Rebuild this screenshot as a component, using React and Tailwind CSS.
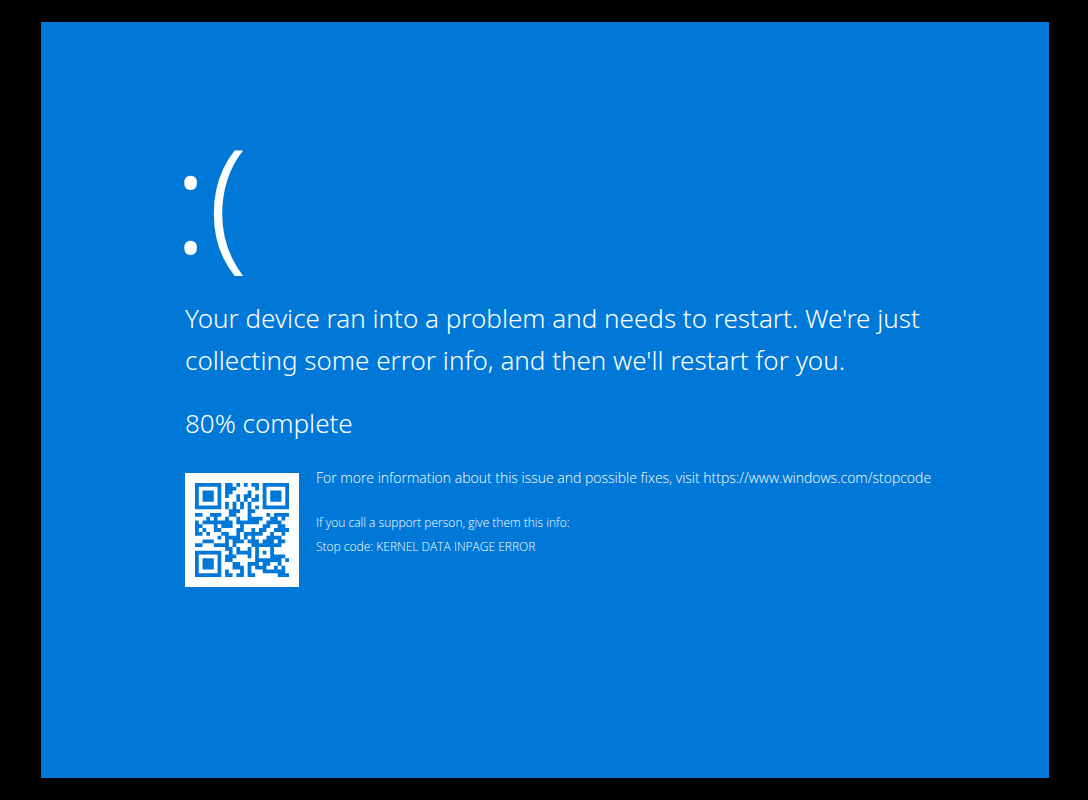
import React, { useMemo } from 'react';

const STOP_URL = 'https://www.windows.com/stopcode';

// QR version 2, error correction level L
const SIZE = 25;
const DATA_LEN = 34;
const ECC_LEN = 10;
const FORMAT_BITS = 0b110011000101111; // level L, mask 4

const gfMultiply = (x, y) => {
  let z = 0;
  for (let i = 7; i >= 0; i--) {
    z = (z << 1) ^ ((z >>> 7) * 0x11d);
    z ^= ((y >>> i) & 1) * x;
  }
  return z;
};

const reedSolomon = (data) => {
  const divisor = new Array(ECC_LEN - 1).fill(0).concat(1);
  let root = 1;
  for (let i = 0; i < ECC_LEN; i++) {
    for (let j = 0; j < ECC_LEN; j++) {
      divisor[j] = gfMultiply(divisor[j], root);
      if (j + 1 < ECC_LEN) divisor[j] ^= divisor[j + 1];
    }
    root = gfMultiply(root, 2);
  }

  const result = new Array(ECC_LEN).fill(0);
  data.forEach((b) => {
    const factor = b ^ result.shift();
    result.push(0);
    divisor.forEach((d, i) => {
      result[i] ^= gfMultiply(d, factor);
    });
  });
  return result;
};

const encodeText = (text) => {
  const bits = [];
  const push = (value, len) => {
    for (let i = len - 1; i >= 0; i--) bits.push((value >>> i) & 1);
  };
  push(4, 4); // byte mode
  push(text.length, 8);
  [...text].forEach((c) => push(c.charCodeAt(0), 8));
  while (bits.length < DATA_LEN * 8) bits.push(0);

  const bytes = [];
  for (let i = 0; i < bits.length; i += 8) {
    bytes.push(parseInt(bits.slice(i, i + 8).join(''), 2));
  }
  return bytes.concat(reedSolomon(bytes));
};

const buildQr = (text) => {
  // grid[y][x], null means the module is still free for data
  const grid = Array.from({ length: SIZE }, () => new Array(SIZE).fill(null));
  const set = (x, y, dark) => {
    if (x >= 0 && x < SIZE && y >= 0 && y < SIZE) grid[y][x] = Boolean(dark);
  };

  // Timing patterns
  for (let i = 0; i < SIZE; i++) {
    set(6, i, i % 2 === 0);
    set(i, 6, i % 2 === 0);
  }

  // Finder patterns with their light border
  [[3, 3], [SIZE - 4, 3], [3, SIZE - 4]].forEach(([cx, cy]) => {
    for (let dy = -4; dy <= 4; dy++) {
      for (let dx = -4; dx <= 4; dx++) {
        const dist = Math.max(Math.abs(dx), Math.abs(dy));
        set(cx + dx, cy + dy, dist !== 2 && dist !== 4);
      }
    }
  });

  // Alignment pattern
  for (let dy = -2; dy <= 2; dy++) {
    for (let dx = -2; dx <= 2; dx++) {
      set(18 + dx, 18 + dy, Math.max(Math.abs(dx), Math.abs(dy)) !== 1);
    }
  }

  // Format info, both copies
  const bit = (i) => (FORMAT_BITS >>> i) & 1;
  for (let i = 0; i <= 5; i++) set(8, i, bit(i));
  set(8, 7, bit(6));
  set(8, 8, bit(7));
  set(7, 8, bit(8));
  for (let i = 9; i < 15; i++) set(14 - i, 8, bit(i));
  for (let i = 0; i < 8; i++) set(SIZE - 1 - i, 8, bit(i));
  for (let i = 8; i < 15; i++) set(8, SIZE - 15 + i, bit(i));
  set(8, SIZE - 8, true);

  // Data in zigzag columns, masked
  const codewords = encodeText(text);
  let n = 0;
  for (let right = SIZE - 1; right >= 1; right -= 2) {
    if (right === 6) right = 5;
    for (let v = 0; v < SIZE; v++) {
      for (let j = 0; j < 2; j++) {
        const x = right - j;
        const upward = ((right + 1) & 2) === 0;
        const y = upward ? SIZE - 1 - v : v;
        if (grid[y][x] !== null) continue;
        const byte = codewords[n >>> 3] || 0;
        const value = (byte >>> (7 - (n & 7))) & 1;
        const mask = (Math.floor(x / 3) + Math.floor(y / 2)) % 2 === 0;
        grid[y][x] = Boolean(value) !== mask;
        n++;
      }
    }
  }
  return grid;
};

const QrCode = ({ text }) => {
  const path = useMemo(() => {
    let d = '';
    buildQr(text).forEach((row, y) => {
      row.forEach((dark, x) => {
        if (dark) d += `M${x} ${y}h1v1h-1z`;
      });
    });
    return d;
  }, [text]);

  return (
    <div className="shrink-0 bg-white p-[10px]">
      <svg
        viewBox={`0 0 ${SIZE} ${SIZE}`}
        className="block h-[94px] w-[94px] fill-[#0078d7]"
        role="img"
        aria-label="QR code"
      >
        <path d={path} />
      </svg>
    </div>
  );
};

export default function App() {
  return (
    <div className="flex min-h-screen flex-col bg-black pt-[22px] pr-[39px] pb-[22px] pl-[41px]">
      <main className="flex-1 bg-[#0078d7] pt-[101px] pr-10 pb-10 pl-[132px] font-['Noto_Sans',sans-serif] font-light text-white">
        <div className="text-[143px] leading-[150px]">:(</div>

        <div className="mt-6 ml-3 max-w-[770px]">
          <h1 className="text-[26px] leading-[42px]">
            Your device ran into a problem and needs to restart. We're just collecting some error info, and then
            we'll restart for you.
          </h1>
          <p className="mt-[21px] text-[26px] leading-[42px]">80% complete</p>

          <div className="mt-[29px] flex items-start gap-[17px]">
            <QrCode text={STOP_URL} />
            <div className="font-['Open_Sans',sans-serif]">
              <p className="text-[14px] leading-[10px]">
                For more information about this issue and possible fixes, visit <a href={STOP_URL}>{STOP_URL}</a>
              </p>
              <div className="mt-7 text-[12px] leading-[24px]">
                <p>If you call a support person, give them this info:</p>
                <p>Stop code: KERNEL DATA INPAGE ERROR</p>
              </div>
            </div>
          </div>
        </div>
      </main>
    </div>
  );
}
